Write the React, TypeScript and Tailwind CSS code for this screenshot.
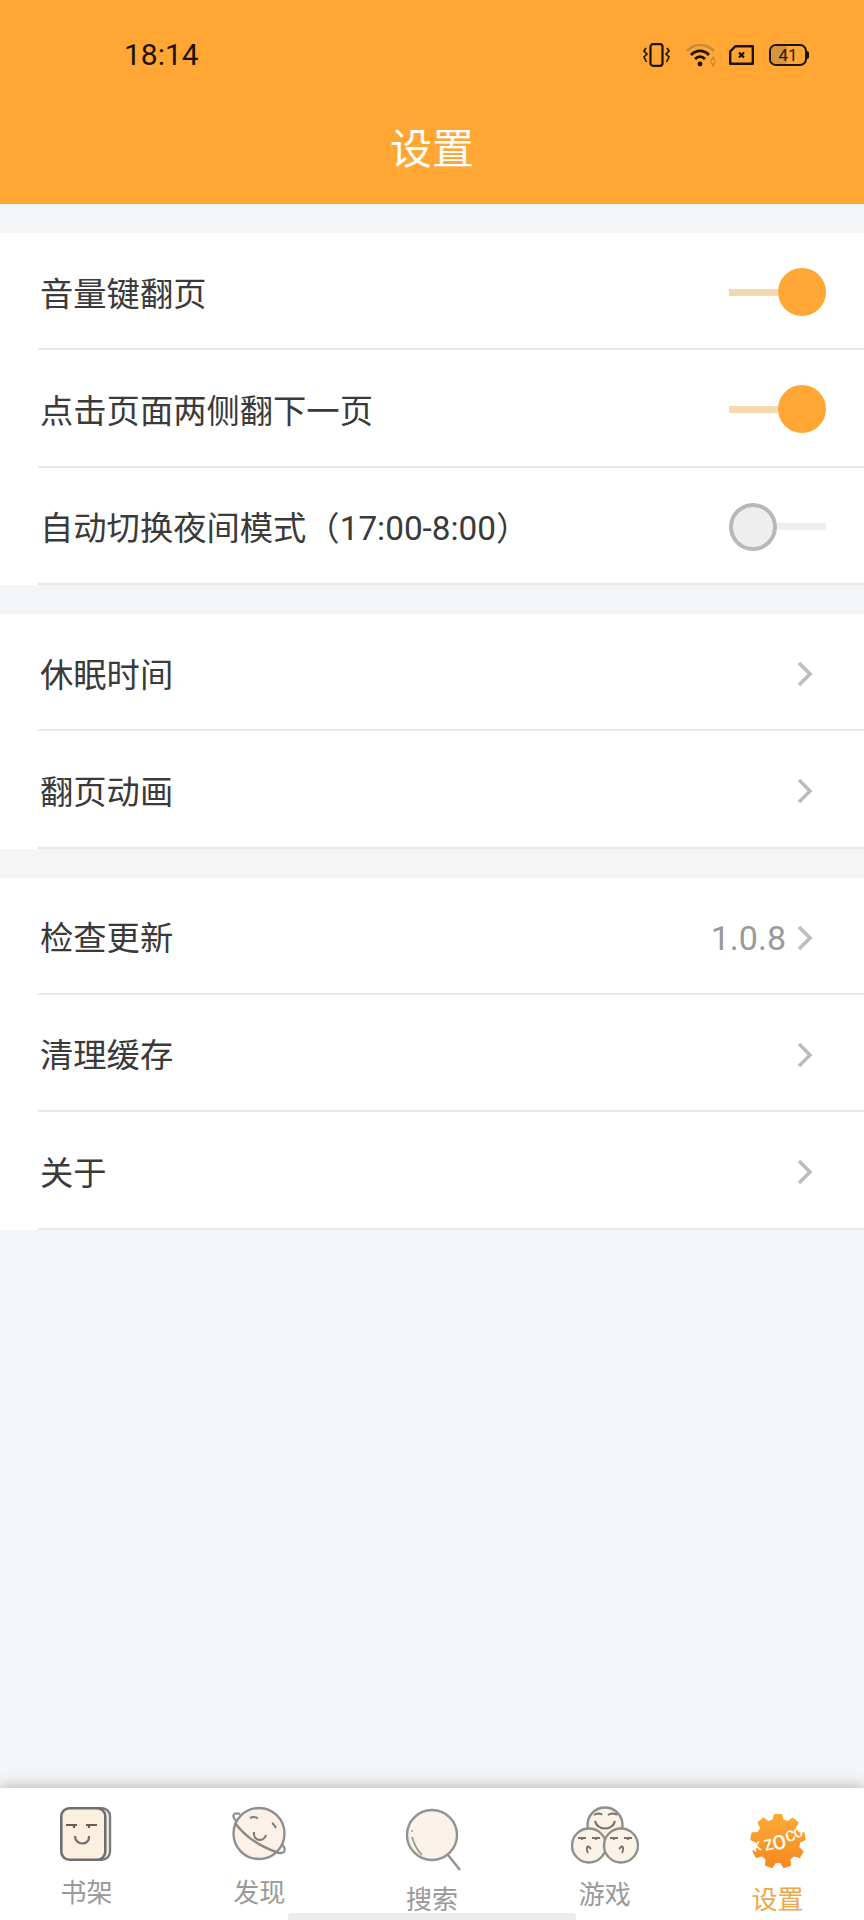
const FONT = "font-['Roboto','Noto_Sans_CJK_SC',sans-serif]";

function Chevron() {
  return (
    <svg width="18" height="26" viewBox="0 0 18 26" fill="none" className="block">
      <path d="M3 2 L14 13 L3 24" stroke="#bdbdbd" strokeWidth="3.6" />
    </svg>
  );
}

function SwitchOn() {
  return (
    <div className="flex items-center w-[97px]">
      <div className="h-[7px] w-[49px] bg-[#f3d8b0]" />
      <div className="h-12 w-12 rounded-full bg-[#ffa634]" />
    </div>
  );
}

function SwitchOff() {
  return (
    <div className="flex items-center w-[97px]">
      <div className="h-12 w-12 rounded-full bg-[#eeeeee] border-4 border-[#b8b8b8]" />
      <div className="h-[7px] w-[49px] bg-[#efefef]" />
    </div>
  );
}

function Row({ label, right }: { label: string; right: React.ReactNode }) {
  return (
    <div className="h-[117.33px] ml-[38px] pl-[2px] pt-[3px] border-b-2 border-[#e8e8e8] flex items-center justify-between">
      <span className="text-[33.3px] leading-none text-[#3a3a3a] translate-y-[2px]">{label}</span>
      {right}
    </div>
  );
}

function Arrow({ value }: { value?: string }) {
  return (
    <div className="flex items-center pr-[50px] translate-y-[1px]">
      {value && <span className="text-[34px] leading-none text-[#9a9a9a] mr-[10px]">{value}</span>}
      <Chevron />
    </div>
  );
}

function StatusIcons() {
  return (
    <div className="flex items-center">
      <svg width="27" height="24" viewBox="0 0 27 24" fill="none" className="mr-[16px]">
        <rect x="7.5" y="1.2" width="12" height="21.6" rx="2.5" stroke="#1c1206" strokeWidth="2.2" />
        <path d="M3 5 L1 8 L4 11 L1 14 L3.5 19" stroke="#1c1206" strokeWidth="1.6" />
        <path d="M24 5 L26 8 L23 11 L26 14 L23.5 19" stroke="#1c1206" strokeWidth="1.6" />
      </svg>
      <svg width="31" height="24" viewBox="0 0 31 24" fill="none" className="mr-[12px]">
        <path d="M1 8 C8 0 20 0 28 8" stroke="#c98c36" strokeWidth="2.6" />
        <path d="M5 12 C10 6.5 18 6.5 23 12" stroke="#1c1206" strokeWidth="2.8" />
        <path d="M9 16 C12 13 16 13 19 16" stroke="#1c1206" strokeWidth="2.8" />
        <circle cx="14" cy="21" r="2.4" fill="#1c1206" />
        <path d="M25 18 L27 14 L29 18 M25 19 L27 23 L29 19" stroke="#c98c36" strokeWidth="1.5" />
      </svg>
      <svg width="25" height="20" viewBox="0 0 25 20" fill="none" className="mr-[15px]">
        <path d="M6.5 1.2 H23.8 V18.8 H1.2 V6.5 Z" stroke="#1c1206" strokeWidth="2.4" strokeLinejoin="round" />
        <path d="M10 7.5 L15 12.5 M15 7.5 L10 12.5" stroke="#1c1206" strokeWidth="2.2" />
      </svg>
      <div className="relative h-[22px] w-[38px] rounded-[7px] border-2 border-[#1c1206] overflow-hidden flex items-center justify-center">
        <div className="absolute left-0 top-0 bottom-0 w-[16px] bg-[#d5953e]" />
        <span className="relative text-[17px] leading-none text-[#2a1a08]">41</span>
      </div>
      <div className="h-[8px] w-[2px] bg-[#1c1206] rounded-r-sm" />
    </div>
  );
}

function BookIcon() {
  return (
    <svg width="52" height="54" viewBox="0 0 52 54" fill="none" className="block">
      <rect x="9" y="1.3" width="41" height="51.4" rx="8" fill="#f3f3f3" stroke="#7a7a7a" strokeWidth="2.4" />
      <rect x="1.3" y="1.3" width="44" height="51.4" rx="8" fill="#fbf0e0" stroke="#6f6f6f" strokeWidth="2.6" />
      <path d="M6 18 H17 M14 18 V21" stroke="#6b5b4d" strokeWidth="2.2" />
      <path d="M37 18 H26 M29 18 V21" stroke="#6b5b4d" strokeWidth="2.2" />
      <path d="M15 29 C15 39 30 39 29 29" stroke="#6d6d6d" strokeWidth="2.2" />
    </svg>
  );
}

function PlanetIcon() {
  return (
    <svg width="56" height="56" viewBox="0 0 56 56" fill="none" className="block">
      <path d="M6 16 C0 10 2 6 9 8 M49 37 C56 42 55 48 47 47" stroke="#8f8f8f" strokeWidth="2.2" />
      <circle cx="28" cy="27.5" r="25.5" fill="#fbf1e6" stroke="#8f8f8f" strokeWidth="2.4" />
      <path d="M4 17 C15 32 33 42 48 47" stroke="#8a8a8a" strokeWidth="2.4" />
      <path d="M19 12 C22 10.5 25 11 27 12.5 M41 17 C43 18 44 20 45 22" stroke="#7d7d7d" strokeWidth="2" />
      <path d="M23 26 C22 36 33 36 35 29" stroke="#7d7d7d" strokeWidth="2.2" />
    </svg>
  );
}

function SearchIcon() {
  return (
    <svg width="56" height="64" viewBox="0 0 56 64" fill="none" className="block">
      <circle cx="27" cy="27" r="25" fill="#faf2e9" stroke="#929292" strokeWidth="2.4" />
      <path d="M43 47 L55 62" stroke="#929292" strokeWidth="2.4" />
      <path d="M7 29 C9 36 12 42 17 47" stroke="#9a9a9a" strokeWidth="1.8" />
      <circle cx="7" cy="23" r="1" fill="#9a9a9a" />
    </svg>
  );
}

function Face({ cx, cy, flip }: { cx: number; cy: number; flip?: boolean }) {
  return (
    <g transform={`translate(${cx} ${cy}) scale(${flip ? -1 : 1} 1)`} stroke="#77706a" strokeWidth="1.8" fill="none">
      <path d="M-11 -5 H-3 M-7 -5 V-3 M3 -5 H11 M7 -5 V-3" />
      <path d="M-1 3 C-3 5 -2 8 -1 10 M-1 3 L2 6" />
    </g>
  );
}

function GameIcon() {
  return (
    <svg width="68" height="58" viewBox="0 0 68 58" fill="none" className="block">
      <circle cx="34" cy="19" r="17.5" fill="#faf1e7" stroke="#8f8f8f" strokeWidth="2.4" />
      <path d="M23 9 C26 7 30 7 31 9 M37 9 C40 7 44 7 46 9" stroke="#77706a" strokeWidth="1.8" />
      <path d="M24 15 C27 25 41 25 44 15" stroke="#77706a" strokeWidth="2.2" />
      <circle cx="18" cy="39.5" r="17" fill="#faf1e7" stroke="#8f8f8f" strokeWidth="2.4" />
      <circle cx="50" cy="39.5" r="17" fill="#faf1e7" stroke="#8f8f8f" strokeWidth="2.4" />
      <Face cx={18} cy={37} />
      <Face cx={50} cy={37} flip />
    </svg>
  );
}

function gearPath(cx: number, cy: number, ro: number, ri: number, n: number) {
  const pts: string[] = [];
  for (let i = 0; i < n; i++) {
    const a = (i / n) * Math.PI * 2 - Math.PI / 2;
    const w = (Math.PI * 2) / n;
    const seq: [number, number][] = [
      [a - w * 0.32, ri],
      [a - w * 0.18, ro],
      [a + w * 0.18, ro],
      [a + w * 0.32, ri],
    ];
    seq.forEach(([t, r]) => pts.push(`${(cx + r * Math.cos(t)).toFixed(2)} ${(cy + r * Math.sin(t)).toFixed(2)}`));
  }
  return "M" + pts.join(" L") + " Z";
}

function GearIcon() {
  const letters: [string, number, number, number, number][] = [
    ["K", 8, 37, -14, 13],
    ["Z", 20, 36, -14, 15],
    ["O", 31, 35, -14, 20],
    ["C", 42, 27, -18, 15],
    ["O", 50, 23, -22, 13],
  ];
  return (
    <svg width="56" height="54" viewBox="0 0 56 54" fill="none" className="block">
      <defs>
        <linearGradient id="gearFill" x1="0" y1="0" x2="0" y2="1">
          <stop offset="0" stopColor="#fbaa34" />
          <stop offset="1" stopColor="#f6891f" />
        </linearGradient>
      </defs>
      <path d={gearPath(28, 27, 27, 21.5, 9)} fill="url(#gearFill)" stroke="url(#gearFill)" strokeWidth="1.5" strokeLinejoin="round" />
      {letters.map(([c, x, y, r, s], i) => (
        <text key={i} x={x} y={y} transform={`rotate(${r} ${x} ${y})`} fontFamily="Roboto, sans-serif" fontWeight="500" fontSize={s} fill="#ffffff" textAnchor="middle">
          {c}
        </text>
      ))}
    </svg>
  );
}

function Tab({ label, active, children, iconClass, labelClass }: { label: string; active?: boolean; children: React.ReactNode; iconClass: string; labelClass: string }) {
  return (
    <div className="flex-1 flex flex-col items-center">
      <div className={iconClass}>{children}</div>
      <span className={`${labelClass} text-[26px] leading-none ${active ? "text-[#f0a64c]" : "text-[#999999]"}`}>{label}</span>
    </div>
  );
}

export default function App() {
  return (
    <div className={`relative w-[864px] h-[1920px] overflow-hidden flex flex-col bg-[#f4f5f7] ${FONT}`}>
      <header className="h-[204px] bg-[#ffa634] flex flex-col">
        <div className="h-[110px] flex items-center justify-between pl-[124px] pr-[55px]">
          <span className="text-[30px] leading-none text-[#1c1206]">18:14</span>
          <StatusIcons />
        </div>
        <div className="text-center text-[42px] leading-none text-white mt-[19px]">设置</div>
      </header>

      <main className="flex-1 flex flex-col gap-[29px] pt-[29px]">
        <section className="bg-white">
          <Row label="音量键翻页" right={<div className="pr-[38px]"><SwitchOn /></div>} />
          <Row label="点击页面两侧翻下一页" right={<div className="pr-[38px]"><SwitchOn /></div>} />
          <Row label="自动切换夜间模式（17:00-8:00）" right={<div className="pr-[38px]"><SwitchOff /></div>} />
        </section>
        <section className="bg-white">
          <Row label="休眠时间" right={<Arrow />} />
          <Row label="翻页动画" right={<Arrow />} />
        </section>
        <section className="bg-white">
          <Row label="检查更新" right={<Arrow value="1.0.8" />} />
          <Row label="清理缓存" right={<Arrow />} />
          <Row label="关于" right={<Arrow />} />
        </section>
      </main>

      <nav className="h-[132px] bg-white flex shadow-[0_-3px_12px_rgba(0,0,0,0.22)]">
        <Tab label="书架" iconClass="mt-[19px]" labelClass="mt-[19px]"><BookIcon /></Tab>
        <Tab label="发现" iconClass="mt-[18px]" labelClass="mt-[18px]"><PlanetIcon /></Tab>
        <Tab label="搜索" iconClass="mt-[20px] ml-[2px]" labelClass="mt-[15px]"><SearchIcon /></Tab>
        <Tab label="游戏" iconClass="mt-[18px]" labelClass="mt-[18px]"><GameIcon /></Tab>
        <Tab label="设置" active iconClass="mt-[26px]" labelClass="mt-[19px]"><GearIcon /></Tab>
      </nav>

      <div className="absolute left-[288px] bottom-0 w-[288px] h-[7px] rounded-t-[4px] bg-[#ececec]" />
    </div>
  );
}
